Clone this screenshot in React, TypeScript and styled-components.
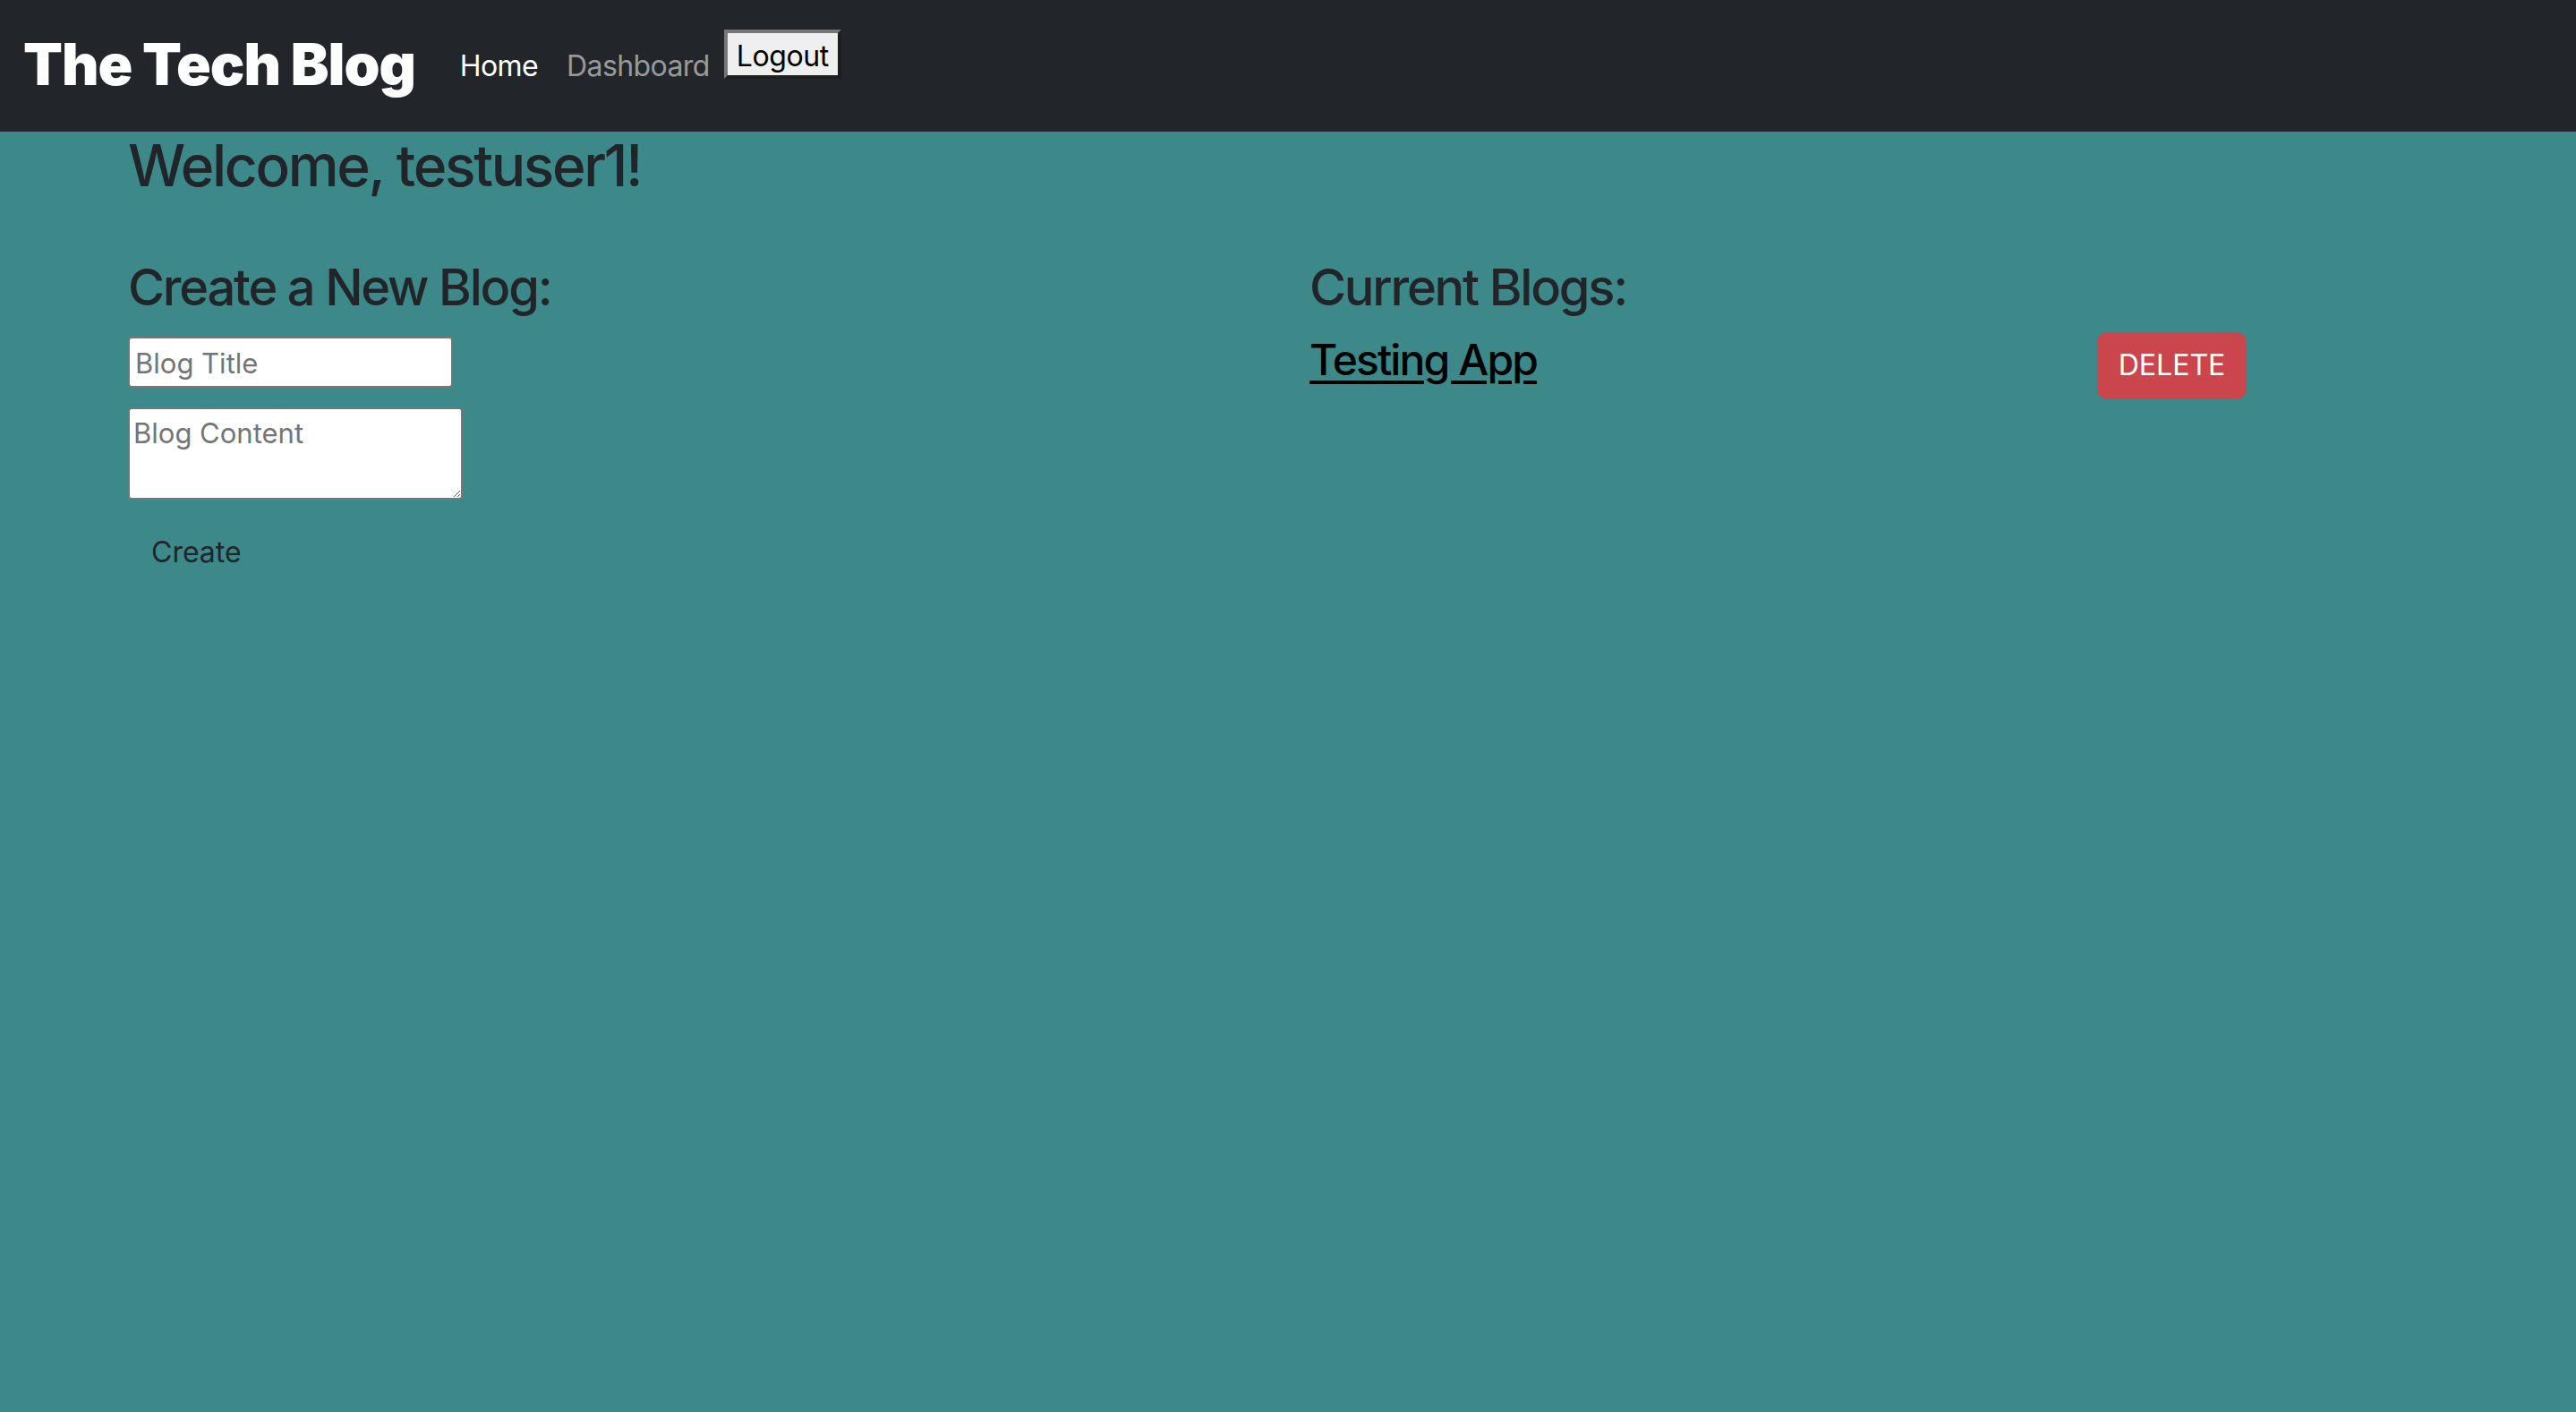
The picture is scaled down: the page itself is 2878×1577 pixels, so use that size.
import React from "react";
import styled, { createGlobalStyle } from "styled-components";

const GlobalStyle = createGlobalStyle`
  html, body {
    margin: 0;
    padding: 0;
    background: #3d8989;
    font-family: Inter, "Noto Sans", "Liberation Sans", sans-serif;
    color: #212529;
  }
  * { box-sizing: border-box; }
`;

const NavBar = styled.header`
  height: 147px;
  background: #222529;
  display: flex;
  align-items: center;
  padding-left: 26px;
`;

const Brand = styled.a`
  font-size: 64px;
  font-weight: 900;
  color: #ffffff;
  letter-spacing: -1px;
  text-decoration: none;
  line-height: 1;
  margin-top: -4px;
`;

const NavList = styled.nav`
  display: flex;
  align-items: center;
  align-self: stretch;
  margin-left: 34px;
`;

const NavLink = styled.a<{ $active?: boolean }>`
  font-size: 32px;
  line-height: 1.5;
  padding: 0 16px;
  letter-spacing: -0.6px;
  color: ${(p) => (p.$active ? "#ffffff" : "rgba(255,255,255,0.55)")};
  text-decoration: none;
`;

const LogoutButton = styled.button`
  align-self: flex-start;
  margin-top: 33px;
  margin-left: 0;
  height: 55px;
  padding: 4px 10px 0;
  font-family: Inter, "Liberation Sans", sans-serif;
  font-size: 32px;
  letter-spacing: -0.4px;
  color: #000;
  background: #efefef;
  border-style: solid;
  border-width: 4px;
  border-color: #767676 #1e1e1e #1e1e1e #767676;
  line-height: 1;
`;

const Container = styled.main`
  max-width: 2640px;
  margin: 0 auto;
  padding: 0 24px;
`;

const Welcome = styled.h2`
  font-size: 64px;
  font-weight: 500;
  line-height: 1.2;
  margin: 0 0 16px;
  letter-spacing: -2.3px;
`;

const Columns = styled.div`
  display: grid;
  grid-template-columns: 1fr 1fr;
  column-gap: 48px;
  margin-top: 64px;
`;

const Column = styled.section``;

const SectionTitle = styled.h3`
  font-size: 56px;
  font-weight: 500;
  line-height: 1.2;
  margin: 0 0 16px;
  letter-spacing: -2.2px;
`;

const Form = styled.form`
  display: flex;
  flex-direction: column;
  align-items: flex-start;
  padding-top: 5px;
`;

const TitleInput = styled.input`
  width: 363px;
  height: 57px;
  border: 2px solid #767676;
  border-radius: 4px;
  padding: 2px 6px 0;
  font-family: Inter, "Liberation Sans", sans-serif;
  font-size: 31px;
  background: #fff;
  &::placeholder { color: #757575; }
`;

const ContentArea = styled.textarea`
  width: 374px;
  height: 103px;
  margin-top: 22px;
  border: 2px solid #767676;
  border-radius: 4px;
  padding: 8px 4px 2px;
  font-family: Inter, "Liberation Sans", sans-serif;
  font-size: 31px;
  line-height: 1.2;
  background: #fff;
  &::placeholder { color: #757575; }
`;

const CreateButton = styled.button`
  margin-top: 21px;
  padding: 12px 24px;
  border: 2px solid transparent;
  background: transparent;
  font-family: Inter, "Liberation Sans", sans-serif;
  font-size: 32px;
  line-height: 1.5;
  color: #212529;
  border-radius: 12px;
`;

const BlogRow = styled.div`
  display: flex;
  margin: 0 -24px;
`;

const BlogCol = styled.div<{ $span: number }>`
  flex: 0 0 ${(p) => (p.$span / 12) * 100}%;
  padding: 0 24px;
`;

const BlogLink = styled.a`
  display: block;
  font-size: 48px;
  font-weight: 500;
  line-height: 1.2;
  color: #000;
  text-decoration: underline;
  text-decoration-thickness: 4px;
  text-underline-offset: 6px;
  margin-top: 2px;
  letter-spacing: -1.9px;
`;

const DeleteButton = styled.button`
  height: 75px;
  width: 167px;
  border: none;
  border-radius: 12px;
  background: #cb464c;
  color: #fff;
  font-family: Inter, "Liberation Sans", sans-serif;
  font-size: 32px;
  line-height: 1.5;
  padding: 0;
`;

export default function App() {
  return (
    <>
      <GlobalStyle />
      <NavBar>
        <Brand href="#">The Tech Blog</Brand>
        <NavList>
          <NavLink $active href="#">Home</NavLink>
          <NavLink href="#">Dashboard</NavLink>
          <LogoutButton>Logout</LogoutButton>
        </NavList>
      </NavBar>
      <Container>
        <Welcome>Welcome, testuser1!</Welcome>
        <Columns>
          <Column>
            <SectionTitle>Create a New Blog:</SectionTitle>
            <Form onSubmit={(e) => e.preventDefault()}>
              <TitleInput placeholder="Blog Title" />
              <ContentArea placeholder="Blog Content" />
              <CreateButton type="submit">Create</CreateButton>
            </Form>
          </Column>
          <Column>
            <SectionTitle>Current Blogs:</SectionTitle>
            <BlogRow>
              <BlogCol $span={8}>
                <BlogLink href="#">Testing App</BlogLink>
              </BlogCol>
              <BlogCol $span={4}>
                <DeleteButton>DELETE</DeleteButton>
              </BlogCol>
            </BlogRow>
          </Column>
        </Columns>
      </Container>
    </>
  );
}
